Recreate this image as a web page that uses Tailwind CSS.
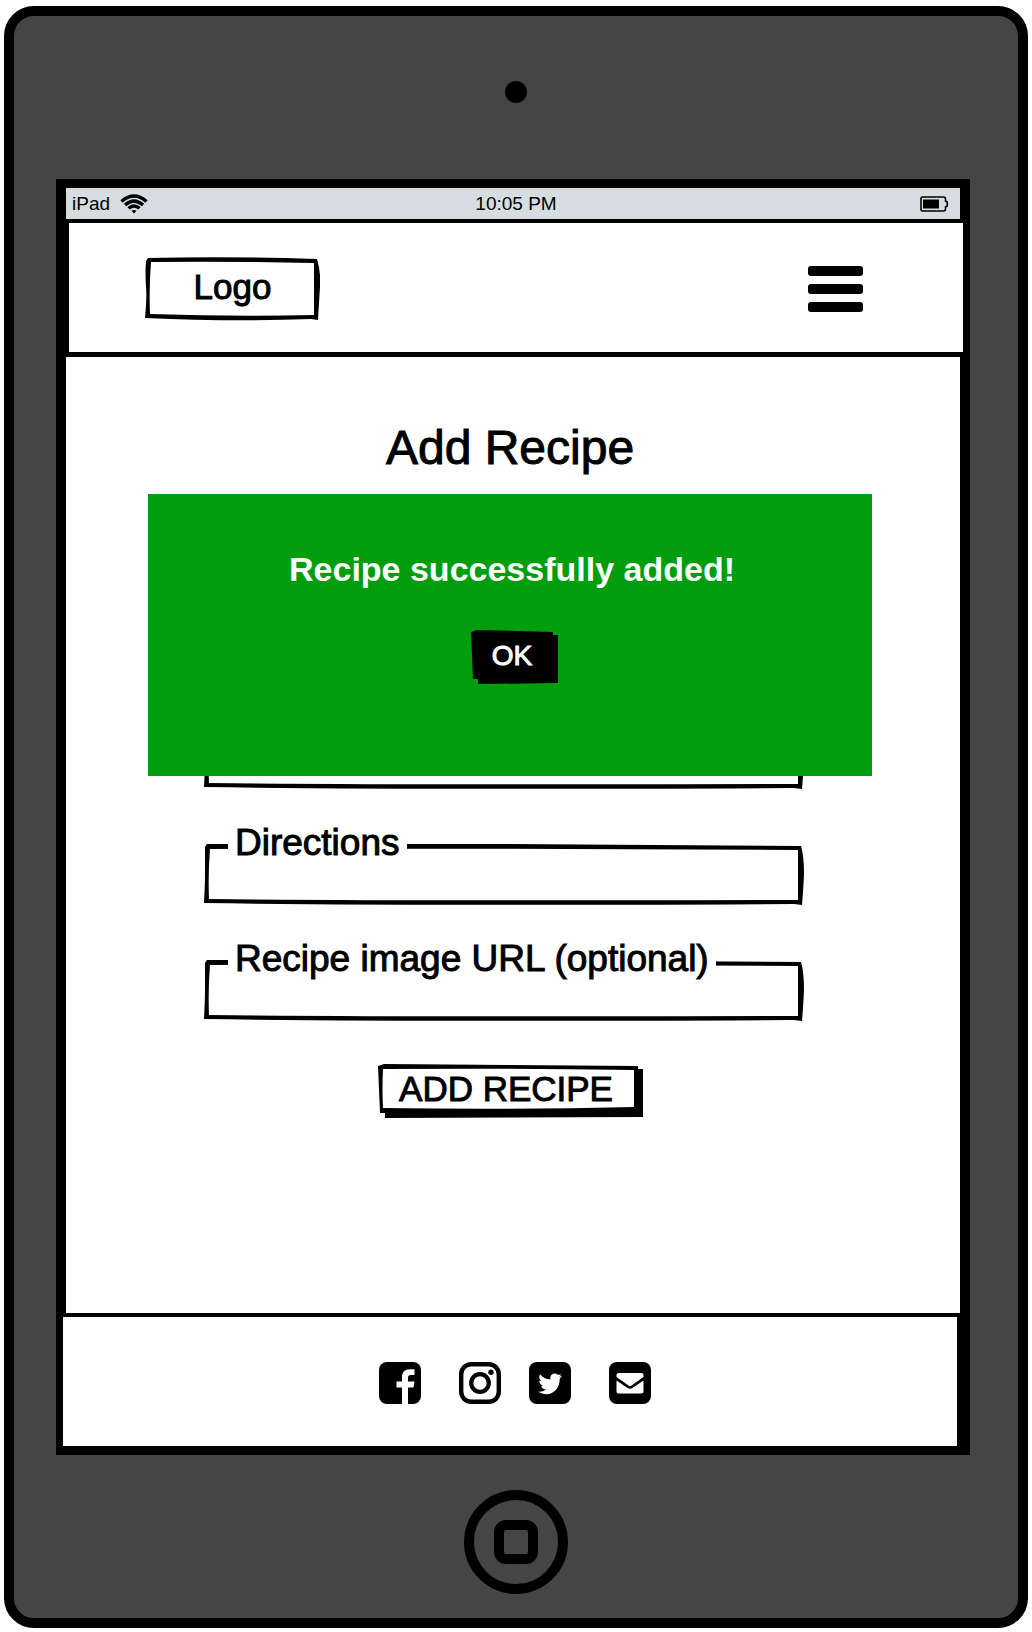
<!DOCTYPE html>
<html lang="en">
<head>
<meta charset="utf-8">
<meta name="viewport" content="width=device-width, initial-scale=1">
<title>Add Recipe</title>
<script src="https://cdn.jsdelivr.net/npm/@tailwindcss/browser@4"></script>
</head>
<body class="flex min-h-screen flex-col bg-white px-1 pt-1.5 pb-1 font-['Liberation_Sans',Arial,sans-serif] text-black">
<div class="flex flex-1 flex-col rounded-[30px] border-10 border-black bg-[#454545] pr-12 pl-[42px]">
  <div class="-mr-1.5 flex h-[163px] items-center justify-center pb-3">
    <span class="size-[22px] rounded-full bg-black"></span>
  </div>

  <div class="flex flex-1 flex-col border-x-10 border-y-9 border-black bg-white">
    <div class="grid h-[31px] grid-cols-3 items-center bg-[#d6dde0] pr-3 pl-1.5 text-[19px] leading-6">
      <div class="flex items-center gap-2.5">
        <span>iPad</span>
        <svg class="h-5 w-7" viewBox="0 0 28 20" fill="none" stroke="#000" stroke-width="3.400" role="img" aria-label="Wi-Fi">
          <path d="M1.500 7.500Q14-3.500 26.500 7.500M5 11Q14 3 23 11M8.500 14.300Q14 9.500 19.500 14.300"/>
          <path d="M11.500 16.800Q14 15 16.500 16.800L14 19.500Z" fill="#000" stroke="none"/>
        </svg>
      </div>
      <span class="pl-3 text-center">10:05 PM</span>
      <svg class="h-4 w-7 justify-self-end" viewBox="0 0 28 16" fill="none" stroke="#000" stroke-width="1.600" role="img" aria-label="Battery">
        <path d="M2.500 1H23.500Q25.500 1 25.500 3V5L27.200 6V10L25.500 11V13Q25.500 15 23.500 15H2.500Q1 15 1 13V3Q1 1 2.500 1Z"/>
        <path d="M3 3.500H19V12.500H3Z" fill="#000" stroke="none"/>
      </svg>
    </div>

    <header class="-mr-[3px] flex h-[138px] items-center justify-between border-t-4 border-b-5 border-l-3 border-black bg-white pt-0.5 pr-[100px] pl-[76px]">
      <a href="#" class="relative flex h-16 w-[175px] items-center justify-center pb-1 text-[35px] leading-10 [-webkit-text-stroke:1px_#000]">
        <svg class="absolute inset-0 size-full" viewBox="0 0 175 64" preserveAspectRatio="none" aria-hidden="true">
          <path fill-rule="evenodd" d="M3 1Q80-1 172 2Q176 15 175 30Q174 45 173 63L166 62Q90 65 0 61Q2 40 1 30Q0 15 1 4ZM6 5Q4 30 5 57Q90 60 169 58V6Q80 4 6 5Z"/>
        </svg>
        <span class="relative">Logo</span>
      </a>
      <button type="button" aria-label="Menu" class="flex w-[55px] flex-col gap-2">
        <span class="h-2.5 w-full rounded-[3px] bg-black"></span>
        <span class="h-2.5 w-full rounded-[3px] bg-black"></span>
        <span class="h-2.5 w-full rounded-[3px] bg-black"></span>
      </button>
    </header>

    <main class="flex-1 pt-[63px] pr-[88px] pl-[82px]">
      <h1 class="pb-[18px] text-center text-5xl leading-14 [-webkit-text-stroke:1px_#000]">Add Recipe</h1>
      <div class="relative">
        <form class="flex flex-col pt-[234px]">
          <div class="mr-[68px] ml-14 flex flex-col gap-[55px] text-[37px] leading-10 [-webkit-text-stroke:1px_#000]">
            <div class="relative h-[61px]">
              <svg class="absolute inset-0 size-full" viewBox="0 0 600 61" preserveAspectRatio="none" aria-hidden="true">
                <path fill-rule="evenodd" d="M3 0H300L597 2Q600 12 600 30Q599 50 598 61L590 60Q200 62 0 59Q1 40 1 30V3ZM6 5Q4 30 5 55Q200 57 594 56V6Q200 4 6 5Z"/>
              </svg>
              <input type="text" aria-label="Ingredients" class="relative size-full bg-transparent px-8 text-2xl outline-none">
            </div>
            <div class="relative h-[61px]">
              <svg class="absolute inset-0 size-full" viewBox="0 0 600 61" preserveAspectRatio="none" aria-hidden="true">
                <path fill-rule="evenodd" d="M3 0H300L597 2Q600 12 600 30Q599 50 598 61L590 60Q200 62 0 59Q1 40 1 30V3ZM6 5Q4 30 5 55Q200 57 594 56V6Q200 4 6 5Z"/>
              </svg>
              <input id="directions" type="text" class="relative size-full bg-transparent px-8 text-2xl outline-none">
              <label for="directions" class="absolute -top-[21px] left-6 bg-white px-[7px]">Directions</label>
            </div>
            <div class="relative h-[61px]">
              <svg class="absolute inset-0 size-full" viewBox="0 0 600 61" preserveAspectRatio="none" aria-hidden="true">
                <path fill-rule="evenodd" d="M3 0H300L597 2Q600 12 600 30Q599 50 598 61L590 60Q200 62 0 59Q1 40 1 30V3ZM6 5Q4 30 5 55Q200 57 594 56V6Q200 4 6 5Z"/>
              </svg>
              <input id="image-url" type="text" class="relative size-full bg-transparent px-8 text-2xl outline-none">
              <label for="image-url" class="absolute -top-[21px] left-6 bg-white px-[7px]">Recipe image URL (optional)</label>
            </div>
          </div>
          <button type="submit" class="relative mt-[43px] h-[54px] w-[265px] self-center pr-2 pb-1 text-[35px] leading-10 whitespace-nowrap [-webkit-text-stroke:1px_#000]">
            <svg class="absolute inset-0 size-full" viewBox="0 0 265 54" preserveAspectRatio="none" aria-hidden="true">
              <path fill-rule="evenodd" d="M0 2L6 0L260 2V5H265V53L7 54V49H2ZM5 5Q4 25 5 44Q130 46 256 43V6Q130 4 5 5Z"/>
            </svg>
            <span class="relative">ADD RECIPE</span>
          </button>
        </form>

        <div role="alert" class="absolute inset-x-0 top-0 flex h-[282px] flex-col items-center bg-[#009d0d] pt-[55px]">
          <p class="pl-1 text-[34px] leading-10 font-bold text-white">Recipe successfully added!</p>
          <button type="button" class="relative mt-[41px] ml-2 h-[54px] w-[87px] pr-1 pb-0.5 text-[28px] leading-8 text-white [-webkit-text-stroke:1px_#fff]">
            <svg class="absolute inset-0 size-full" viewBox="0 0 87 54" preserveAspectRatio="none" aria-hidden="true">
              <path d="M0 2L6 0L82 2V5H87V53L7 54V49H2Z"/>
            </svg>
            <span class="relative">OK</span>
          </button>
        </div>
      </div>
    </main>

    <footer class="-ml-[3px] flex h-[133px] items-center justify-center gap-[38px] border-t-4 border-r-3 border-black bg-white pt-0.5 pl-2.5">
      <a href="#" aria-label="Facebook">
        <svg class="size-[42px]" viewBox="0 0 42 42"><rect width="42" height="42" rx="8"/><path fill="#fff" d="M23 42V25.500H17.500V19.500H23V15.500C23 10 26 7.200 31 7.200H35.500V13H32C29.500 13 29 14 29 16V19.500H35.500L34.500 25.500H29V42Z"/></svg>
      </a>
      <div class="flex gap-7">
        <a href="#" aria-label="Instagram">
          <svg class="size-[42px]" viewBox="0 0 42 42" fill="none" stroke="#000"><rect x="2.200" y="2.200" width="37.600" height="37.600" rx="10" stroke-width="4.400"/><circle cx="21" cy="21" r="8.800" stroke-width="4.200"/><circle cx="32" cy="10.200" r="2.700" fill="#000" stroke="none"/></svg>
        </a>
        <a href="#" aria-label="Twitter">
          <svg class="size-[42px]" viewBox="0 0 42 42"><rect width="42" height="42" rx="8"/><path fill="#fff" d="M33 13.800C32 14.300 31 14.600 30 14.700C31 14 31.800 13 32.200 11.900C31.200 12.500 30.200 12.900 29 13.100C26 9.800 20.500 12 21.400 17.500C17.200 17.300 13.500 15.300 11 12.200C9.500 14.700 10.300 17.600 12.500 19.200C11.700 19.200 10.900 18.900 10.200 18.500C10.200 21.200 12 23.300 14.400 23.900C13.700 24.100 13 24.100 12.200 24C12.800 26 14.700 27.500 16.900 27.600C14.700 29.300 12 30.100 9.200 29.800C19.500 36.200 31 29.300 30.700 16.700C31.600 15.900 32.400 14.900 33 13.800Z"/></svg>
        </a>
      </div>
      <a href="#" aria-label="Email">
        <svg class="size-[42px]" viewBox="0 0 42 42"><rect width="42" height="42" rx="8"/><path fill="#fff" d="M9.500 11H32.500Q34.500 11 34.500 13V15L22.500 23.500Q21 24.500 19.500 23.500L7.500 15V13Q7.500 11 9.500 11ZM7.500 18.500L18.500 26Q21 27.500 23.500 26L34.500 18.500V29.500Q34.500 31.500 32.500 31.500H9.500Q7.500 31.500 7.500 29.500Z"/></svg>
      </a>
    </footer>
  </div>

  <div class="-mr-1.5 flex h-[163px] items-center justify-center pt-2.5">
    <button type="button" aria-label="Home" class="flex size-[104px] items-center justify-center rounded-full border-10 border-black">
      <span class="size-11 rounded-xl border-10 border-black"></span>
    </button>
  </div>
</div>
</body>
</html>
